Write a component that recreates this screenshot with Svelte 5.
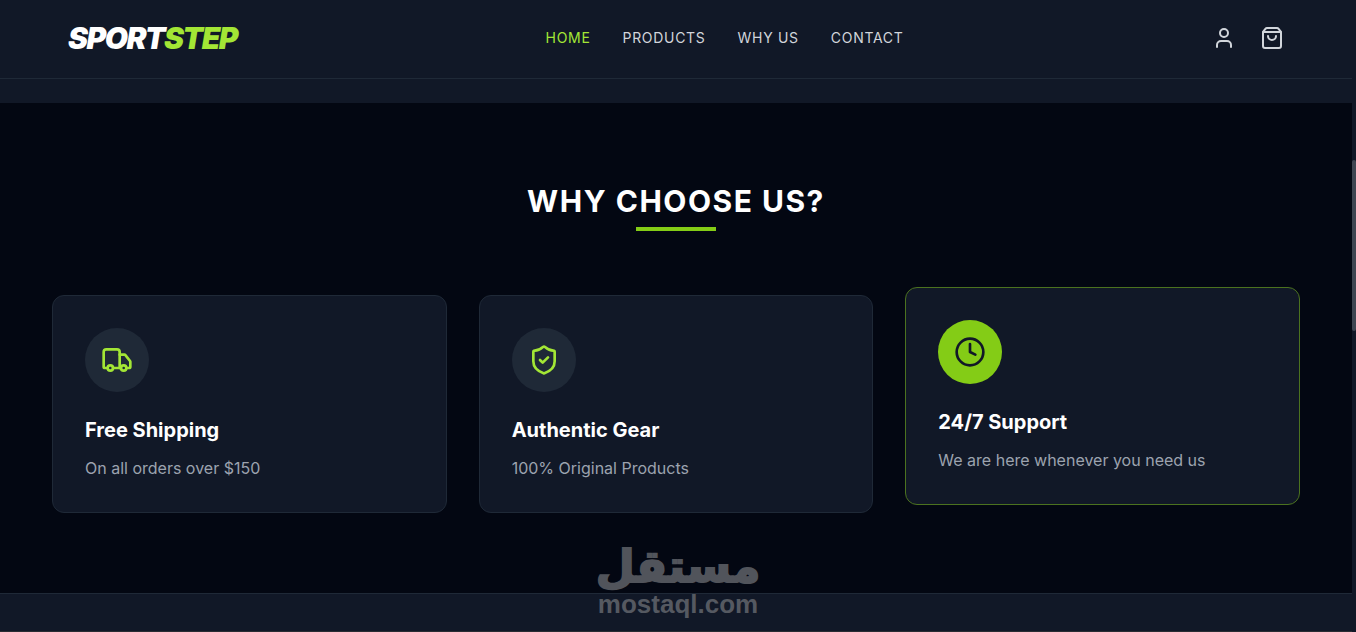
<script>
  let active = "Home";

  const links = ["Home", "Products", "Why Us", "Contact"];

  const features = [
    {
      icon: "truck",
      title: "Free Shipping",
      text: "On all orders over $150",
    },
    {
      icon: "shield",
      title: "Authentic Gear",
      text: "100% Original Products",
    },
    {
      icon: "clock",
      title: "24/7 Support",
      text: "We are here whenever you need us",
      raised: true,
    },
  ];
</script>

<div class="window">
  <div class="page">
    <header>
      <div class="bar">
        <a class="logo" href="#home">SPORT<span>STEP</span></a>
        <nav>
          {#each links as link}
            <a
              href="#{link.toLowerCase().replace(' ', '-')}"
              class:active={link === active}
              on:click={() => (active = link)}>{link}</a>
          {/each}
        </nav>
        <div class="actions">
          <button aria-label="Account">
            <svg viewBox="0 0 24 24">
              <path d="M19 21v-2a4 4 0 0 0-4-4H9a4 4 0 0 0-4 4v2" />
              <circle cx="12" cy="7" r="4" />
            </svg>
          </button>
          <button aria-label="Cart">
            <svg viewBox="0 0 24 24">
              <path d="M16 10a4 4 0 0 1-8 0" />
              <path d="M3.103 6.034h17.794" />
              <path d="M3.4 5.467a2 2 0 0 0-.4 1.2V20a2 2 0 0 0 2 2h14a2 2 0 0 0 2-2V6.667a2 2 0 0 0-.4-1.2l-2-2.667A2 2 0 0 0 17 2H7a2 2 0 0 0-1.6.8z" />
            </svg>
          </button>
        </div>
      </div>
    </header>

    <main>
      <section id="why-us">
        <h2>Why Choose Us?</h2>
        <div class="cards">
          {#each features as feature}
            <article class="card" class:raised={feature.raised}>
              <div class="badge">
                <svg viewBox="0 0 24 24">
                  {#if feature.icon === "truck"}
                    <path d="M14 18V6a2 2 0 0 0-2-2H4a2 2 0 0 0-2 2v11a1 1 0 0 0 1 1h2" />
                    <path d="M15 18H9" />
                    <path d="M19 18h2a1 1 0 0 0 1-1v-3.65a1 1 0 0 0-.22-.624l-3.48-4.35A1 1 0 0 0 17.52 8H14" />
                    <circle cx="17" cy="18" r="2" />
                    <circle cx="7" cy="18" r="2" />
                  {:else if feature.icon === "shield"}
                    <path d="M20 13c0 5-3.5 7.5-7.66 8.95a1 1 0 0 1-.67-.01C7.5 20.5 4 18 4 13V6a1 1 0 0 1 1-1c2 0 4.5-1.2 6.24-2.72a1.17 1.17 0 0 1 1.52 0C14.51 3.81 17 5 19 5a1 1 0 0 1 1 1z" />
                    <path d="m9 12 2 2 4-4" />
                  {:else}
                    <circle cx="12" cy="12" r="10" />
                    <path d="M12 6v6l4 2" />
                  {/if}
                </svg>
              </div>
              <h3>{feature.title}</h3>
              <p>{feature.text}</p>
            </article>
          {/each}
        </div>
      </section>
    </main>

    <footer></footer>
  </div>

  <div class="track">
    <div class="thumb"></div>
  </div>

  <div class="watermark">
    <span class="arabic" lang="ar" dir="rtl">مستقل</span>
    <span class="domain">mostaql.com</span>
  </div>
</div>

<style>
  :global(body) {
    background-color: #111827;
    font-family: Inter, "Liberation Sans", sans-serif;
  }

  .window {
    position: relative;
    display: grid;
    grid-template-columns: 1fr 4px;
    height: 100vh;
    overflow: hidden;
    color: white;
  }

  .page {
    display: flex;
    flex-direction: column;
  }

  header {
    border-bottom: 1px solid #1f2937;
  }

  .bar {
    display: flex;
    justify-content: space-between;
    align-items: center;
    max-width: 1280px;
    margin: 0 auto;
    padding: 20px 32px 22px;
    box-sizing: border-box;
  }

  a {
    text-decoration: none;
  }

  .logo {
    font-size: 30px;
    line-height: 36px;
    font-weight: 900;
    font-style: italic;
    letter-spacing: -0.05em;
    color: white;
  }

  .logo span {
    color: #a3e635;
  }

  nav {
    display: flex;
    gap: 32px;
  }

  nav a {
    font-size: 14px;
    line-height: 20px;
    font-weight: 400;
    letter-spacing: 0.05em;
    text-transform: uppercase;
    color: #d1d5db;
  }

  nav a.active {
    color: #a3e635;
  }

  .actions {
    display: flex;
    gap: 24px;
  }

  button {
    display: flex;
    padding: 0;
    border: none;
    background: none;
    color: #d1d5db;
    cursor: pointer;
  }

  svg {
    width: 24px;
    height: 24px;
    fill: none;
    stroke: currentColor;
    stroke-width: 2;
    stroke-linecap: round;
    stroke-linejoin: round;
  }

  main {
    padding-top: 24px;
  }

  section {
    padding: 80px 0;
    background-color: #030712;
  }

  h2 {
    margin: 0 0 64px;
    font-size: 30px;
    line-height: 36px;
    font-weight: 700;
    letter-spacing: 0.05em;
    text-align: center;
    text-transform: uppercase;
  }

  h2::after {
    content: "";
    display: block;
    width: 80px;
    height: 4px;
    margin: 8px auto 0;
    background-color: #84cc16;
  }

  .cards {
    display: grid;
    grid-template-columns: repeat(3, 1fr);
    gap: 32px;
    max-width: 1280px;
    margin: 0 auto;
    padding: 0 16px;
    box-sizing: border-box;
  }

  .card {
    padding: 32px;
    border: 1px solid #1f2937;
    border-radius: 12px;
    background-color: #111827;
  }

  .card.raised {
    border-color: #4b721f;
    transform: translateY(-8px);
  }

  .badge {
    display: grid;
    place-items: center;
    width: 64px;
    height: 64px;
    margin-bottom: 24px;
    border-radius: 50%;
    background-color: #1f2937;
    color: #a3e635;
  }

  .badge svg {
    width: 32px;
    height: 32px;
  }

  .raised .badge {
    background-color: #84cc16;
    color: #111827;
  }

  h3 {
    margin: 0 0 12px;
    font-size: 20px;
    line-height: 28px;
    font-weight: 700;
  }

  p {
    margin: 0;
    font-size: 16px;
    line-height: 24px;
    color: #9ca3af;
  }

  footer {
    flex: 1;
    border-top: 1px solid #1f2937;
    border-bottom: 1px solid #2a2d33;
  }

  .track {
    padding-top: 160px;
    background-color: #111827;
  }

  .thumb {
    height: 171px;
    border-radius: 4px;
    background-color: #3f4652;
  }

  .watermark {
    position: absolute;
    left: 50%;
    bottom: 14px;
    transform: translateX(-50%);
    display: flex;
    flex-direction: column;
    align-items: center;
    font-weight: 700;
    color: #73757a;
    opacity: 0.7;
    pointer-events: none;
  }

  .arabic {
    font-family: "DejaVu Sans", sans-serif;
    font-size: 45px;
    line-height: 46px;
    -webkit-text-stroke: 2px #73757a;
  }

  .domain {
    font-family: "Liberation Sans", sans-serif;
    font-size: 26px;
    line-height: 28px;
  }

  @media (max-width: 800px) {
    nav {
      display: none;
    }

    .cards {
      grid-template-columns: 1fr;
    }
  }
</style>
